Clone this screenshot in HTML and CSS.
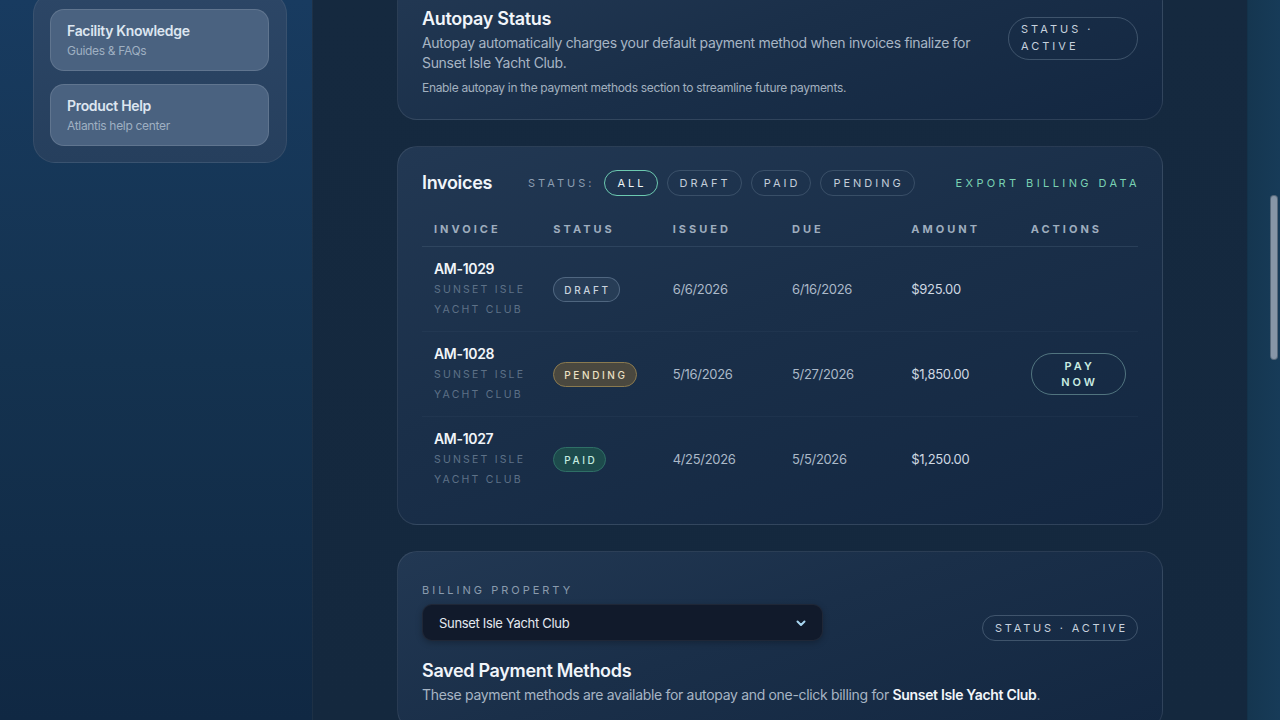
FILE: index.html
```html
<!DOCTYPE html>
<html lang="en">
<head>
<meta charset="utf-8">
<title>Billing</title>
<link rel="stylesheet" href="styles.css">
</head>
<body>
<aside class="sidebar">
  <div class="side-panel">
    <a class="side-item" href="#">
      <span class="side-title">Facility Knowledge</span>
      <span class="side-sub">Guides &amp; FAQs</span>
    </a>
    <a class="side-item" href="#">
      <span class="side-title">Product Help</span>
      <span class="side-sub">Atlantis help center</span>
    </a>
  </div>
</aside>

<main class="main">
  <section class="card card-autopay">
    <div class="autopay-row">
      <div class="autopay-text">
        <h2 class="card-title">Autopay Status</h2>
        <p class="card-desc">Autopay automatically charges your default payment method when invoices finalize for Sunset Isle Yacht Club.</p>
        <p class="card-note">Enable autopay in the payment methods section to streamline future payments.</p>
      </div>
      <span class="status-pill status-pill-wrap">STATUS · ACTIVE</span>
    </div>
  </section>

  <section class="card card-invoices">
    <div class="inv-header">
      <h2 class="card-title">Invoices</h2>
      <div class="filters">
        <span class="filter-label">STATUS:</span>
        <button class="filter active">ALL</button>
        <button class="filter">DRAFT</button>
        <button class="filter">PAID</button>
        <button class="filter">PENDING</button>
      </div>
      <a class="export" href="#">EXPORT BILLING DATA</a>
    </div>
    <table class="inv-table">
      <thead>
        <tr>
          <th>INVOICE</th><th>STATUS</th><th>ISSUED</th><th>DUE</th><th>AMOUNT</th><th>ACTIONS</th>
        </tr>
      </thead>
      <tbody>
        <tr>
          <td class="inv-id-cell"><div class="inv-id">AM-1029</div><div class="inv-prop">SUNSET ISLE YACHT CLUB</div></td>
          <td><span class="badge badge-draft">DRAFT</span></td>
          <td class="num">6/6/2026</td>
          <td class="num">6/16/2026</td>
          <td class="amt">$925.00</td>
          <td></td>
        </tr>
        <tr>
          <td class="inv-id-cell"><div class="inv-id">AM-1028</div><div class="inv-prop">SUNSET ISLE YACHT CLUB</div></td>
          <td><span class="badge badge-pending">PENDING</span></td>
          <td class="num">5/16/2026</td>
          <td class="num">5/27/2026</td>
          <td class="amt">$1,850.00</td>
          <td><button class="pay-btn">PAY NOW</button></td>
        </tr>
        <tr>
          <td class="inv-id-cell"><div class="inv-id">AM-1027</div><div class="inv-prop">SUNSET ISLE YACHT CLUB</div></td>
          <td><span class="badge badge-paid">PAID</span></td>
          <td class="num">4/25/2026</td>
          <td class="num">5/5/2026</td>
          <td class="amt">$1,250.00</td>
          <td></td>
        </tr>
      </tbody>
    </table>
  </section>

  <section class="card card-methods">
    <div class="prop-row">
      <div class="prop-field">
        <label class="field-label">BILLING PROPERTY</label>
        <div class="select">
          <span>Sunset Isle Yacht Club</span>
          <svg class="chev" width="12" height="12" viewBox="0 0 12 12"><polyline points="2.5,4.5 6,8 9.5,4.5" fill="none" stroke="#a9d6f0" stroke-width="2" stroke-linecap="round" stroke-linejoin="round"/></svg>
        </div>
      </div>
      <span class="status-pill status-pill-line">STATUS · ACTIVE</span>
    </div>
    <h2 class="card-title methods-title">Saved Payment Methods</h2>
    <p class="card-desc">These payment methods are available for autopay and one-click billing for <strong>Sunset Isle Yacht Club</strong>.</p>
  </section>
</main>

<div class="rail"><div class="thumb"></div></div>
</body>
</html>
```

FILE: styles.css
```css
* { box-sizing: border-box; }
html, body { margin: 0; height: 720px; overflow: hidden; }
body {
  display: flex;
  font-family: Inter, "Noto Sans", "Liberation Sans", sans-serif;
  letter-spacing: -0.02em;
  background: linear-gradient(180deg, #173a60 0%, #122d4c 60%, #0f2640 100%);
  color: #e6edf5;
}

/* Sidebar */
.sidebar {
  width: 312px;
  flex: 0 0 312px;
  padding-left: 33px;
  background: linear-gradient(180deg, #183b60 0%, #14324f 50%, #102843 100%);
}
.side-panel {
  width: 254px;
  margin-top: -8px;
  padding: 16px 17px 16px 16px;
  border-radius: 22px;
  background: linear-gradient(180deg, #2c4666 0%, #263f5d 100%);
  border: 1px solid rgba(255,255,255,0.07);
  display: flex;
  flex-direction: column;
  gap: 13px;
}
.side-item {
  display: flex;
  flex-direction: column;
  padding: 11px 16px 11px;
  border-radius: 14px;
  background: #4a6280;
  border: 1px solid rgba(255,255,255,0.12);
  text-decoration: none;
}
.side-title { font-size: 14px; line-height: 20px; font-weight: 600; color: #dde6f0; }
.side-sub { font-size: 12px; line-height: 16px; color: #9fb0c2; margin-top: 2px; }

/* Main */
.main {
  width: 935px;
  flex: 0 0 935px;
  padding: 0 84px 0 84px;
  background: linear-gradient(180deg, #15293f 0%, #14283e 100%);
  border-left: 1px solid rgba(255,255,255,0.04);
  display: flex;
  flex-direction: column;
  gap: 26px;
}
.card {
  width: 766px;
  border-radius: 20px;
  background: linear-gradient(160deg, #223853 0%, #1a2f49 45%, #132741 100%);
  border: 1px solid rgba(255,255,255,0.09);
  padding: 24px 24px 24px;
  flex: 0 0 auto;
}
.card-title { margin: 0; font-size: 18px; line-height: 24px; font-weight: 600; color: #f1f5fa; }
.card-desc { margin: 2px 0 0; font-size: 14px; line-height: 20px; color: #a7b5c4; }
.card-desc strong { color: #f3f6fa; font-weight: 600; }
.card-note { margin: 6px 0 0; font-size: 12px; line-height: 18px; color: #a2b0bf; }

.card-autopay { margin-top: -18px; padding-bottom: 22px; }
.autopay-row { display: flex; gap: 24px; align-items: flex-start; }
.autopay-text { flex: 1; }

.status-pill {
  flex: 0 0 auto;
  font-size: 11px;
  line-height: 24px;
  letter-spacing: 3px;
  color: #c7d2de;
  border: 1px solid rgba(170,190,210,0.28);
  border-radius: 999px;
  padding: 0 10px 0 13px;
  white-space: nowrap;
}
.status-pill-line { letter-spacing: 2.8px; padding: 0 9px 0 12px; }
.status-pill-wrap {
  width: 130px;
  white-space: normal;
  line-height: 17px;
  padding: 3px 12px 4px 12px;
  margin-top: 10px;
  border-radius: 22px;
}

/* Invoices */
.card-invoices { padding-top: 23px; padding-bottom: 23px; }
.inv-header { display: flex; align-items: center; height: 26px; }
.filters { display: flex; align-items: center; gap: 9px; margin-left: 36px; }
.filter-label { font-size: 11px; letter-spacing: 3px; color: #8c9db0; margin-right: 1px; }
.filter {
  font-family: inherit;
  font-size: 11px;
  line-height: 24px;
  letter-spacing: 3px;
  color: #c2cdd9;
  background: transparent;
  border: 1px solid rgba(160,180,200,0.22);
  border-radius: 999px;
  padding: 0 10px 0 12px;
}
.filter.active { border-color: #6cc9b0; color: #f0f6f8; }
.export {
  margin-left: auto;
  font-size: 11px;
  letter-spacing: 3.4px;
  color: #79d2b3;
  text-decoration: none;
  margin-right: -2px;
}

.inv-table {
  width: 100%;
  table-layout: fixed;
  border-collapse: collapse;
  margin-top: 15px;
}
.inv-table th {
  text-align: left;
  font-size: 11px;
  line-height: 16px;
  font-weight: 700;
  letter-spacing: 3px;
  color: #9eadbe;
  padding: 10px 12px 9px;
  border-bottom: 1px solid rgba(150,175,200,0.14);
}
.inv-table td {
  padding: 11px 12px 11px;
  vertical-align: middle;
  font-size: 13px;
  line-height: 20px;
  border-bottom: 1px solid rgba(150,175,200,0.05);
}
.inv-table tbody tr:last-child td { border-bottom: none; }
.inv-id { font-size: 14px; line-height: 22px; font-weight: 600; color: #f1f5f9; }
.inv-prop { font-size: 10.5px; line-height: 20px; letter-spacing: 2.2px; color: #5d7187; }
.num { color: #abb9c8; }
.amt { color: #cfd8e2; }

.badge {
  display: inline-block;
  font-size: 10px;
  line-height: 14px;
  letter-spacing: 2.6px;
  padding: 5px 8px 4px 10px;
  border-radius: 999px;
  border: 1px solid;
  font-weight: 500;
}
.badge-draft { background: rgba(120,145,170,0.12); border-color: rgba(140,165,190,0.4); color: #c9d3de; }
.badge-pending { background: #4a483f; border-color: #8a7a50; color: #ece1c5; }
.badge-paid { background: #1d4b4c; border-color: #2f6f66; color: #c4ebe0; }

.pay-btn {
  display: block;
  width: 95px;
  font-family: inherit;
  font-size: 11px;
  line-height: 16px;
  font-weight: 600;
  letter-spacing: 3px;
  color: #c9ece2;
  background: transparent;
  border: 1px solid rgba(140,190,185,0.5);
  border-radius: 999px;
  padding: 4px 16px 4px 19px;
  text-align: center;
}

/* Methods */
.card-methods { padding-top: 30px; }
.prop-row { display: flex; align-items: flex-end; justify-content: space-between; }
.prop-field { display: flex; flex-direction: column; gap: 6px; }
.field-label { font-size: 11px; line-height: 16px; letter-spacing: 3px; color: #8a9bad; }
.select {
  width: 401px;
  height: 37px;
  border-radius: 10px;
  background: #111a2b;
  border: 1px solid rgba(255,255,255,0.06);
  box-shadow: 0 2px 6px rgba(0,0,0,0.25);
  display: flex;
  align-items: center;
  justify-content: space-between;
  padding: 0 15px 0 16px;
  font-size: 13px;
  color: #e3e9f0;
}
.methods-title { margin-top: 18px; }

/* Right rail */
.rail {
  flex: 1;
  background: linear-gradient(90deg, #153650 0%, #173b58 100%);
  border-left: 1px solid rgba(0,0,0,0.15);
  padding: 195px 0 0 22px;
}
.thumb {
  width: 8px;
  height: 165px;
  border-radius: 4px;
  background: #8796a7;
  border: 1px solid rgba(40,60,80,0.5);
}
```
